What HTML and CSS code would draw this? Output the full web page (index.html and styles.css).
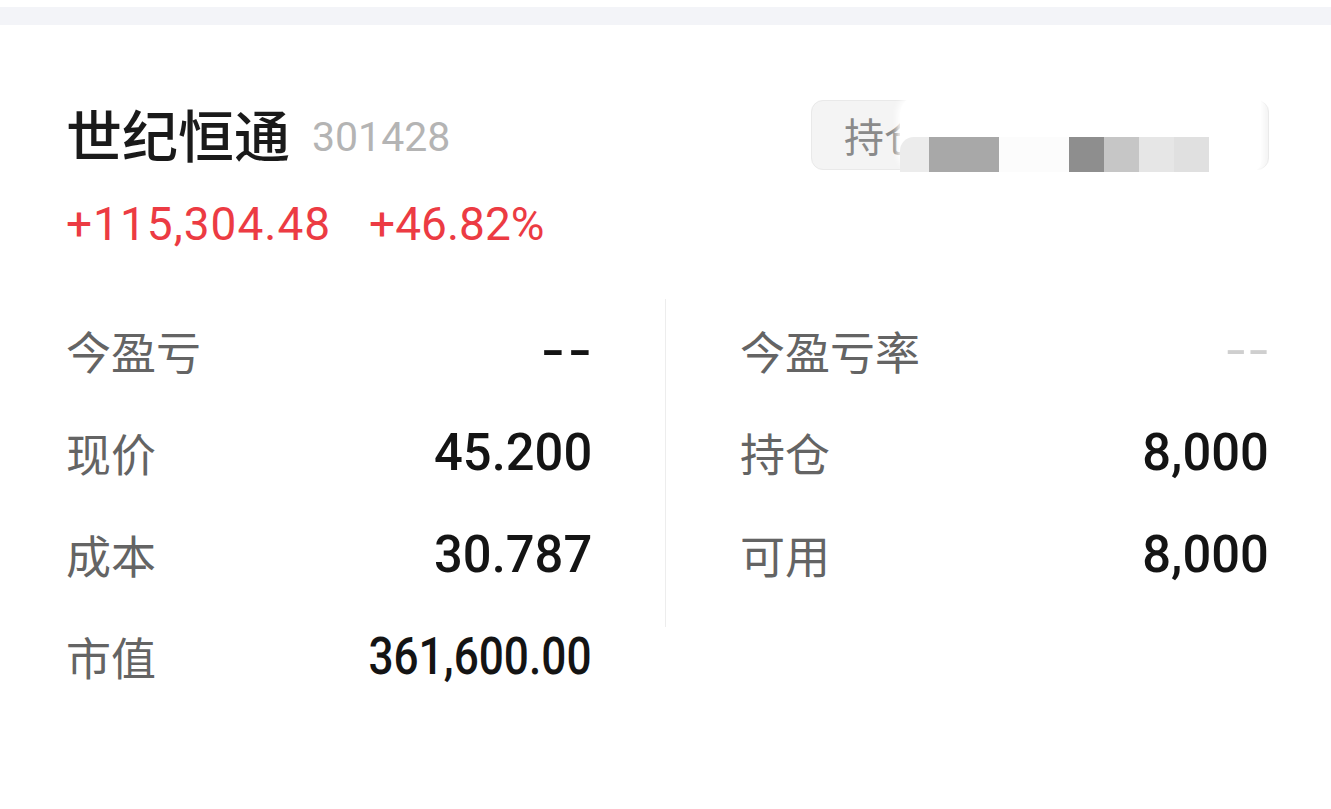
FILE: index.html
```html
<!DOCTYPE html>
<html lang="zh-CN">
<head>
  <meta charset="UTF-8">
  <meta name="viewport" content="width=device-width, initial-scale=1.0">
  <title>持仓详情</title>
  <link rel="stylesheet" href="styles.css">
</head>
<body>
<div class="top-gap"></div>
<div class="card">
  <div class="head">
    <div class="head-left">
      <div class="title-row">
        <span class="stock-name">世纪恒通</span>
        <span class="stock-code">301428</span>
      </div>
      <div class="profit-row">
        <span class="profit-amount">+115,304.48</span>
        <span>+46.82%</span>
      </div>
    </div>
    <div class="pill">
      <span class="pill-text">持仓</span>
      <!-- privacy mosaic over the rest of the pill -->
      <div class="mask">
        <span class="blk b0"></span>
        <span class="blk b1"></span>
        <span class="blk b2"></span>
        <span class="blk b3"></span>
        <span class="blk b4"></span>
        <span class="blk b5"></span>
        <span class="blk b6"></span>
      </div>
    </div>
  </div>

  <div class="stats">
    <div class="col">
      <div class="row"><span class="label">今盈亏</span><span class="value dash">--</span></div>
      <div class="row"><span class="label">现价</span><span class="value">45.200</span></div>
      <div class="row"><span class="label">成本</span><span class="value">30.787</span></div>
      <div class="row"><span class="label">市值</span><span class="value tight">361,600.00</span></div>
    </div>
    <div class="col col-right">
      <div class="row"><span class="label">今盈亏率</span><span class="value dash muted">--</span></div>
      <div class="row"><span class="label">持仓</span><span class="value">8,000</span></div>
      <div class="row"><span class="label">可用</span><span class="value">8,000</span></div>
    </div>
  </div>
</div>
</body>
</html>
```

FILE: styles.css
```css
body {
  margin: 0;
  background: #fff;
  font-family: "Noto Sans CJK SC", "Noto Sans", sans-serif;
  color: #1c1c1c;
}
.top-gap {
  height: 18px;
  margin-top: 7px;
  background: #f3f4f8;
}
.card {
  padding: 72px 62px 0 66px;
}
.head {
  display: flex;
  justify-content: space-between;
  align-items: flex-start;
}
.title-row {
  display: flex;
  align-items: center;
  height: 72px;
}
.stock-name {
  font-size: 56px;
  font-weight: 500;
  color: #1a1a1a;
  line-height: 1;
}
.stock-code {
  font-family: Roboto, sans-serif;
  font-size: 41px;
  color: #b4b4b4;
  margin-left: 22px;
  margin-top: 8px;
}
.profit-row {
  display: flex;
  gap: 38px;
  margin-top: 27px;
  font-family: Roboto, sans-serif;
  font-size: 46px;
  line-height: 56px;
  color: #ec3b43;
}
.profit-amount {
  letter-spacing: 1px;
}
.pill {
  position: relative;
  width: 458px;
  height: 70px;
  margin-top: 3px;
  background: #f4f4f4;
  border: 1px solid #e9e9e9;
  border-radius: 12px;
  display: flex;
  align-items: center;
  box-sizing: border-box;
  padding-left: 32px;
}
.pill-text {
  font-size: 40px;
  color: #8a8a8a;
}
.mask {
  position: absolute;
  left: 88px;
  right: 7px;
  top: -6px;
  bottom: -3px;
  background: #fff;
  border-radius: 20px 4px 10px 22px;
  box-shadow: 0 0 6px 3px #fff;
  display: flex;
  align-items: flex-end;
}
.blk {
  display: block;
  height: 35px;
}
.b0 { width: 29px; background: #ececec; border-radius: 14px 0 0 0; }
.b1 { width: 70px; background: #a8a8a8; }
.b2 { width: 70px; background: #fcfcfc; }
.b3 { width: 35px; background: #8e8e8e; }
.b4 { width: 35px; background: #c6c6c6; }
.b5 { width: 35px; background: #e6e6e6; }
.b6 { width: 35px; background: #e0e0e0; }
.stats {
  display: grid;
  grid-template-columns: 526px 1fr;
  column-gap: 73px;
  margin-top: 47px;
  align-items: start;
}
.col-right {
  border-left: 1px solid #ededed;
  padding-left: 74px;
  padding-bottom: 22px;
}
.row {
  display: flex;
  justify-content: space-between;
  align-items: center;
  height: 102px;
}
.label {
  font-size: 45px;
  color: #646464;
}
.value {
  display: inline-block;
  font-family: Roboto, sans-serif;
  font-size: 52px;
  font-weight: 500;
  color: #141414;
  transform: scaleX(0.975);
  transform-origin: right center;
}
.tight {
  transform: scaleX(0.85);
}
.dash {
  letter-spacing: 3px;
  margin-right: -3px;
  transform: scaleX(1.3);
}
.muted {
  color: #cfcfcf;
  font-weight: 400;
}
```
